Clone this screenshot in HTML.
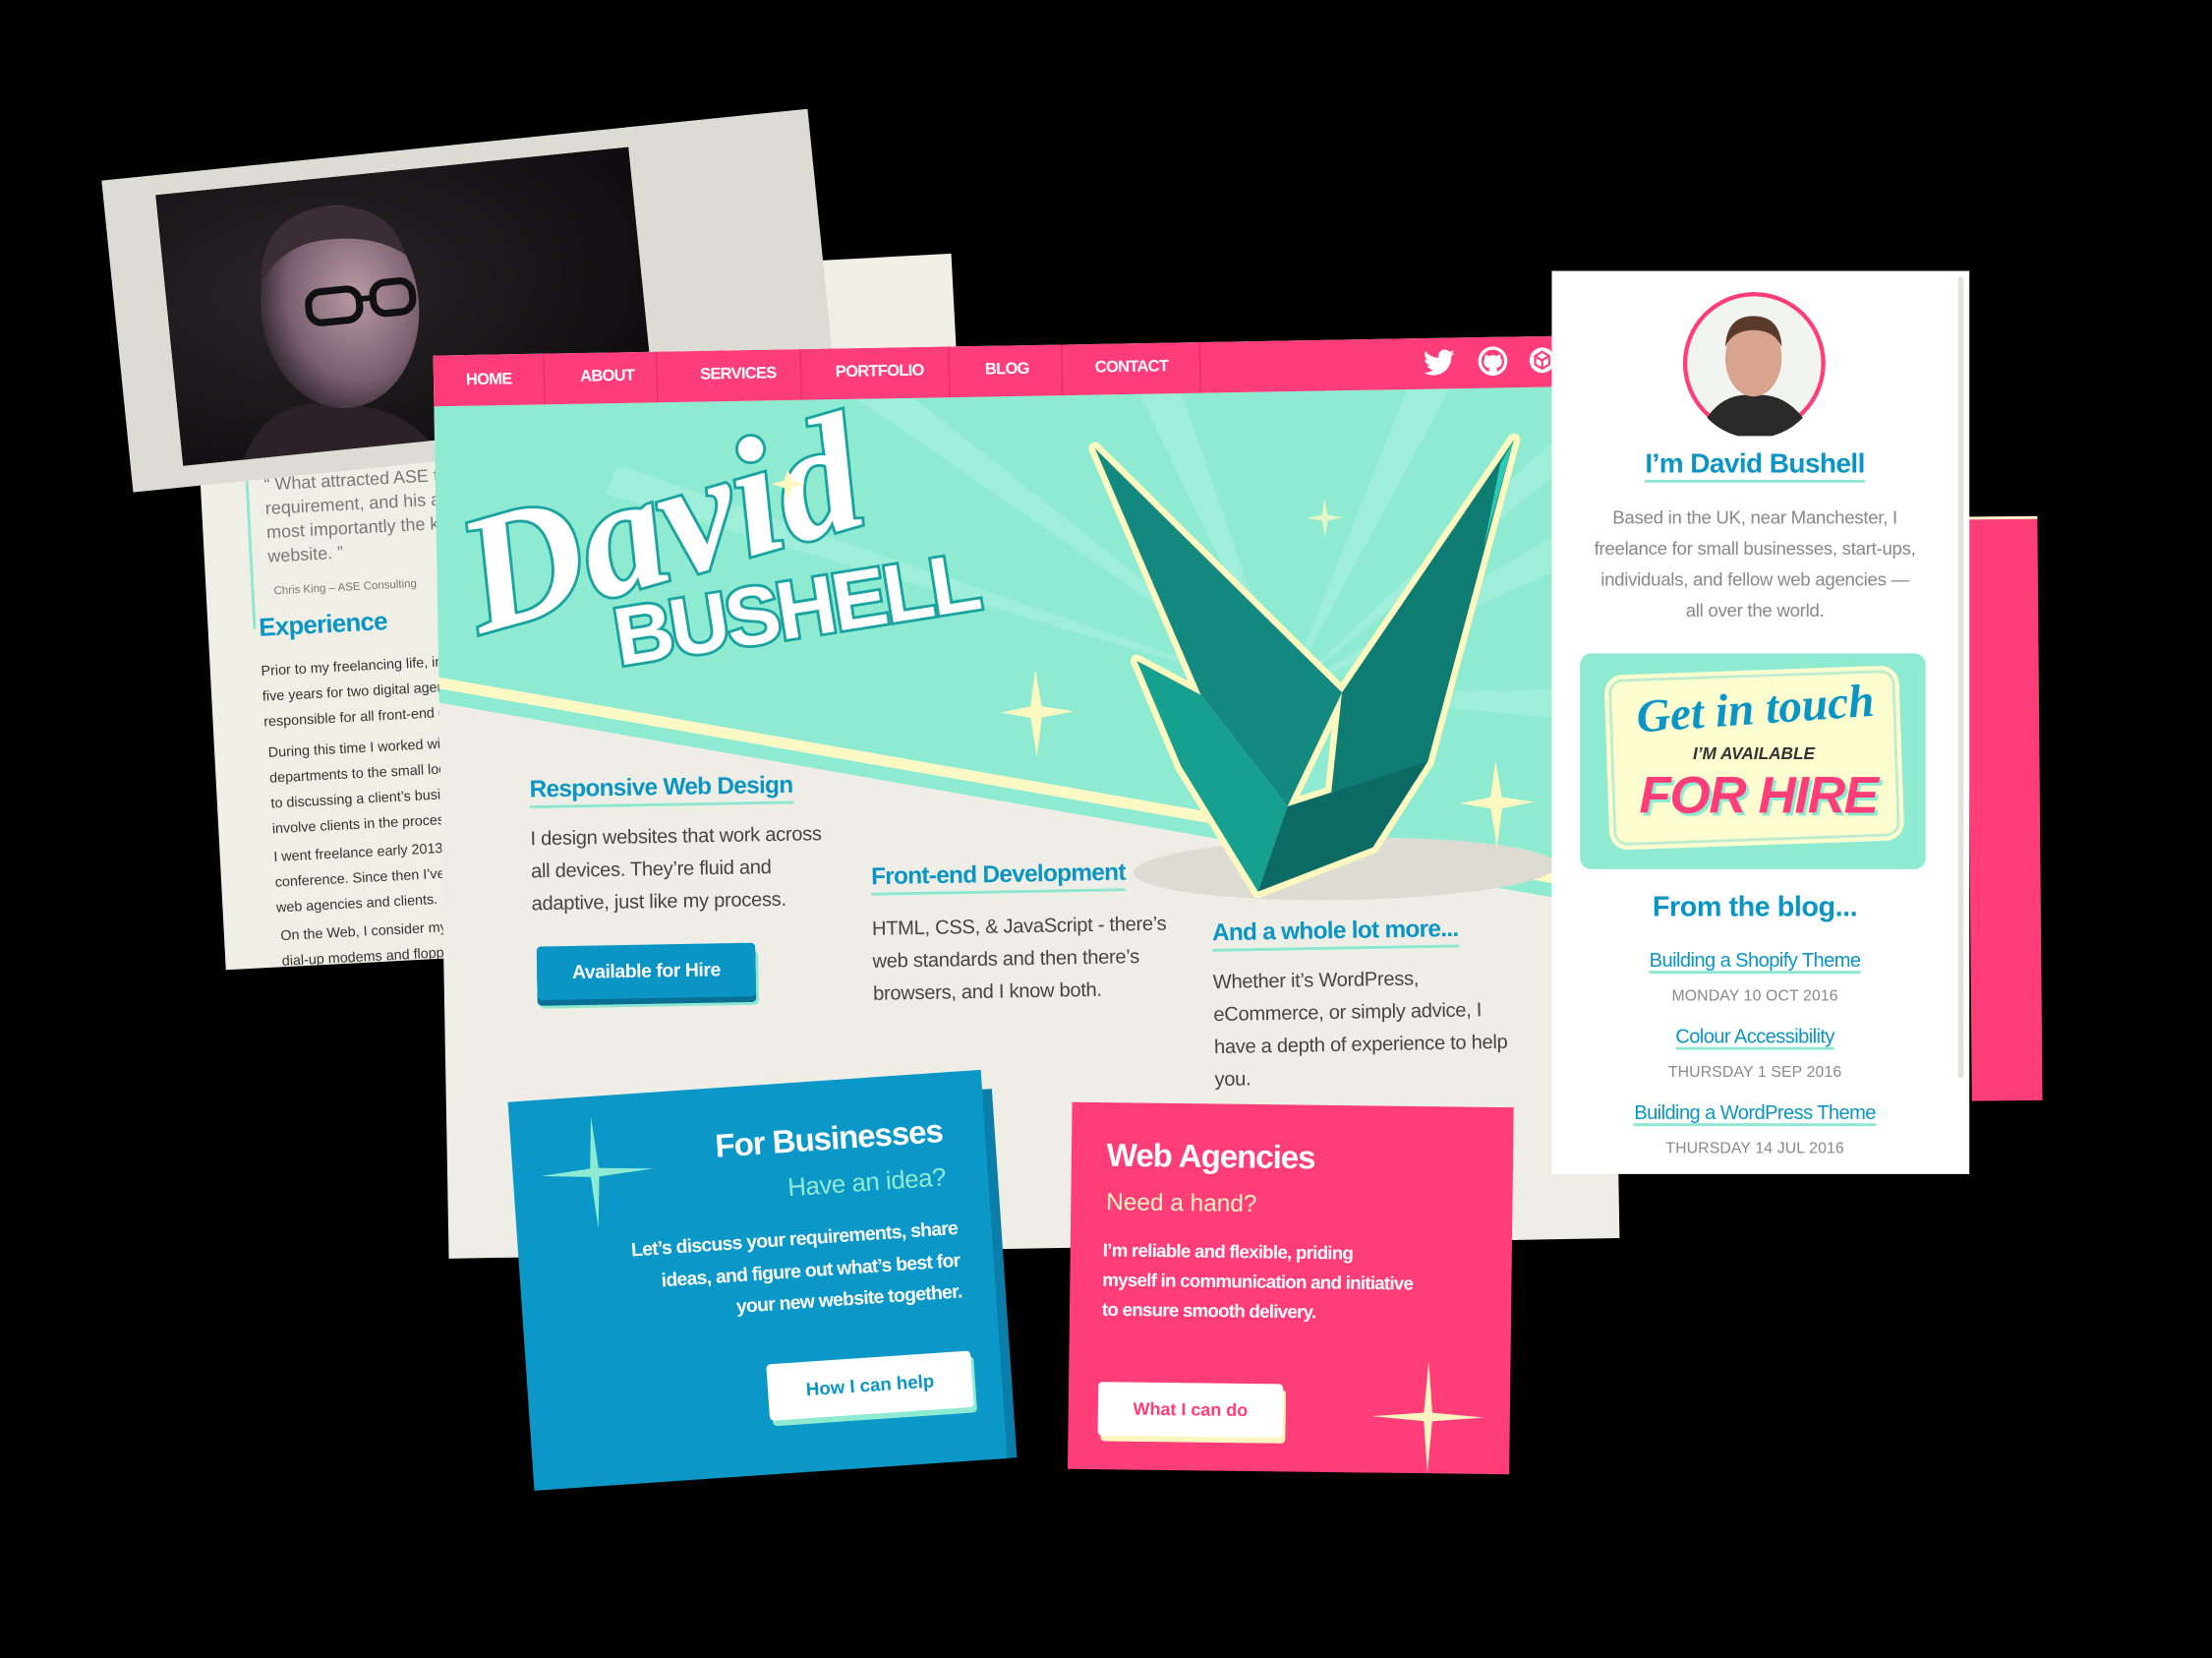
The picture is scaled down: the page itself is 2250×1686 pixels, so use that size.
<!DOCTYPE html>
<html><head><meta charset="utf-8"><style>
*{margin:0;padding:0;box-sizing:border-box}
html,body{width:2250px;height:1686px;background:#000;overflow:hidden}
#w{position:absolute;left:0;top:0;width:1568px;height:1175px;transform:scale(1.43495);transform-origin:0 0;font-family:"Liberation Sans",sans-serif}
.abs{position:absolute}
.paper{left:135px;top:208px;width:540px;height:480px;background:#f0efe6;transform:rotate(-3deg);transform-origin:0 0;overflow:hidden}
.paper p{position:absolute;font-size:10px;color:#333;line-height:18px;white-space:nowrap}
.photo{left:72px;top:128px;width:503px;height:222px;background:#dcdcd4;transform:rotate(-5.8deg);transform-origin:0 0;overflow:hidden}
.main{left:307px;top:252px;width:830px;height:640px;background:#efeee6;transform:rotate(-1deg);transform-origin:0 0;overflow:hidden}
.nav{position:absolute;left:0;top:0;width:830px;height:36px;background:#ff3d7a}
.nav span{position:absolute;top:11px;color:#fff;font-weight:bold;font-size:11.5px;letter-spacing:-0.5px}
.nav i{position:absolute;top:0;width:1px;height:36px;background:#e62f67}
.h{position:absolute;color:#0a95c5;font-weight:bold;font-size:17px;border-bottom:2px solid #8de6d0;line-height:22px;letter-spacing:-0.5px;white-space:nowrap}
.tx{position:absolute;color:#444;font-size:14px;line-height:23px;white-space:nowrap;letter-spacing:-0.2px}
.btn{position:absolute;background:#0a95c5;color:#fff;font-weight:bold;font-size:13.5px;text-align:center;line-height:38px;border-radius:3px;box-shadow:0 4px 0 #0a6f95,2px 6px 0 #8de6d0;letter-spacing:-0.3px}
.blue{left:360px;top:781px;width:336px;height:276px;background:#0b98c8;transform:rotate(-3.9deg);transform-origin:0 0;overflow:hidden}
.pink{left:760px;top:781px;width:313px;height:260px;background:#ff3d78;transform:rotate(0.7deg);transform-origin:0 0;overflow:hidden}
.side{left:1100px;top:192px;width:296px;height:640px;background:#fff}
.c{position:absolute;left:0;width:288px;text-align:center;white-space:nowrap}
.lk{color:#0a95c5;border-bottom:2px solid #8de6d0;font-size:14px;letter-spacing:-0.4px}
.dt{color:#888;font-size:11px;letter-spacing:0.1px}
</style></head><body><div id="w">

<div class="abs" style="left:1396px;top:366px;width:50px;height:414px;background:#ff3d78;transform:rotate(-0.5deg);border-top:2px solid #fdf5c8"></div>

<div class="abs paper">
 <div class="abs" style="left:32px;top:120px;width:2px;height:120px;background:#8de6d0"></div>
 <p style="left:45px;top:130px;font-size:12.5px;color:#777;line-height:17px">“ What attracted ASE to<br>requirement, and his a<br>most importantly the ke<br>website. ”</p>
 <p style="left:48px;top:205px;font-size:8px;color:#777">Chris King – ASE Consulting</p>
 <p style="left:36px;top:230px;font-size:18px;color:#0a95c5;font-weight:bold;letter-spacing:-0.5px">Experience</p>
 <p style="left:36px;top:262px">Prior to my freelancing life, imm<br>five years for two digital agenc<br>responsible for all front-end co</p>
 <p style="left:38px;top:320px">During this time I worked with<br>departments to the small local<br>to discussing a client’s busines<br>involve clients in the process t</p>
 <p style="left:38px;top:394px">I went freelance early 2013 a<br>conference. Since then I’ve p<br>web agencies and clients.</p>
 <p style="left:40px;top:450px">On the Web, I consider myse<br>dial-up modems and floppy</p>
</div>

<div class="abs photo">
 <svg class="abs" style="left:37px;top:14px" width="337" height="193" viewBox="0 0 337 193">
  <defs><radialGradient id="bg" cx="0.3" cy="0.4" r="0.8"><stop offset="0" stop-color="#2a2528"/><stop offset="1" stop-color="#0e0c0e"/></radialGradient>
  <radialGradient id="sk" cx="0.6" cy="0.45" r="0.6"><stop offset="0" stop-color="#b99aa4"/><stop offset="0.7" stop-color="#7a5f70"/><stop offset="1" stop-color="#3a2e38"/></radialGradient></defs>
  <rect width="337" height="193" fill="url(#bg)"/>
  <path d="M40 200 Q60 150 110 160 Q160 165 180 200Z" fill="#2a2226"/>
  <ellipse cx="122" cy="92" rx="56" ry="72" fill="url(#sk)"/>
  <path d="M68 70 Q72 22 120 20 Q165 22 172 60 Q150 42 112 44 Q84 46 68 70Z" fill="#3a2e34"/>
  <rect x="100" y="80" width="36" height="22" rx="9" fill="none" stroke="#111" stroke-width="5"/>
  <rect x="146" y="78" width="28" height="22" rx="9" fill="none" stroke="#111" stroke-width="5"/>
  <path d="M136 88 L146 88" stroke="#111" stroke-width="4"/>
 </svg>
</div>

<div class="abs main">
 <svg class="abs" style="left:0;top:0" width="830" height="640" viewBox="0 0 830 640">
  <polygon points="0,36 830,36 830,388 0,228" fill="#8eebd2"/>
  <g fill="#a6f0dc" opacity="0.7">
   <polygon points="600,250 300,36 340,36"/><polygon points="600,250 500,36 530,36"/>
   <polygon points="600,250 690,36 720,36"/><polygon points="600,250 830,120 830,150"/>
   <polygon points="600,250 830,250 830,275"/><polygon points="600,250 120,100 130,80"/>
   <polygon points="600,250 830,40 830,70"/>
  </g>
  <polygon points="0,228 830,388 830,396 0,236" fill="#fdf9c4"/>
  <polygon points="0,236 830,396 830,406 0,246" fill="#8eebd2"/>
  <g transform="rotate(-15 40 195)">
   <text x="30" y="195" font-family="Liberation Serif" font-style="italic" font-weight="bold" font-size="118" fill="#fff" stroke="#1aa3a0" stroke-width="4" paint-order="stroke">David</text>
  </g>
  <g transform="rotate(-8 128 222)">
   <text x="128" y="222" font-family="Liberation Sans" font-weight="bold" font-size="58" fill="#fff" stroke="#1aa3a0" stroke-width="4" paint-order="stroke" letter-spacing="-2">BUSHELL</text>
  </g>
  <ellipse cx="640" cy="375" rx="150" ry="22" fill="#dcdcd2"/>
  <g stroke="#fdf7c0" stroke-width="9" stroke-linejoin="round" fill="#fdf7c0">
   <polygon points="468,74 640,250 600,330 540,250"/><polygon points="765,73 700,300 630,330 640,250"/>
   <polygon points="495,225 540,250 600,330 578,390 525,300"/><polygon points="600,330 700,300 660,360 578,390"/>
  </g>
  <polygon points="468,74 640,250 600,330 540,250" fill="#14897f"/>
  <polygon points="765,73 700,300 630,330 640,250" fill="#0f7c73"/>
  <polygon points="765,73 742,150 755,90" fill="#2cc9b5"/>
  <polygon points="495,225 540,250 600,330 578,390 525,300" fill="#16a08f"/>
  <polygon points="600,330 700,300 660,360 578,390" fill="#0b6a63"/>
  <g fill="#fdf7c0">
   <path d="M423 230 L427 256 L450 260 L427 264 L423 292 L419 264 L398 260 L419 256Z"/>
   <path d="M748 300 L752 326 L775 330 L752 334 L748 362 L744 334 L722 330 L744 326Z"/>
   <path d="M630 112 L632 124 L643 126 L632 128 L630 140 L628 128 L617 126 L628 124Z" opacity="0.8"/>
   <path d="M250 85 L253 93 L262 95 L253 98 L250 106 L247 98 L238 95 L247 93Z"/>
  </g>
 </svg>
 <div class="nav">
  <span style="left:23px;top:12px">HOME</span><i style="left:78px"></i>
  <span style="left:104px">ABOUT</span><i style="left:158px"></i>
  <span style="left:189px">SERVICES</span><i style="left:260px"></i>
  <span style="left:285px">PORTFOLIO</span><i style="left:365px"></i>
  <span style="left:391px">BLOG</span><i style="left:445px"></i>
  <span style="left:469px">CONTACT</span><i style="left:543px"></i>
  <svg class="abs" style="left:700px;top:6px" width="26" height="24" viewBox="0 0 24 24"><path fill="#fff" d="M23 4.6a9 9 0 0 1-2.6.7 4.6 4.6 0 0 0 2-2.5 9 9 0 0 1-2.9 1.1 4.5 4.5 0 0 0-7.8 4.1A12.8 12.8 0 0 1 2.4 3.3a4.5 4.5 0 0 0 1.4 6 4.5 4.5 0 0 1-2-.6 4.5 4.5 0 0 0 3.6 4.5 4.5 4.5 0 0 1-2 .1 4.5 4.5 0 0 0 4.2 3.1A9 9 0 0 1 1 18.3a12.8 12.8 0 0 0 6.9 2c8.3 0 12.8-6.9 12.8-12.8v-.6A9 9 0 0 0 23 4.6z"/></svg>
  <svg class="abs" style="left:740px;top:6px" width="22" height="22" viewBox="0 0 24 24"><circle cx="12" cy="12" r="10" fill="none" stroke="#fff" stroke-width="2.5"/><path d="M9 21v-4c-2 0-4-1-4-5 0-1 .5-2 1-2.5-.2-.8 0-1.8.2-2.5 1 0 2 .6 2.6 1.1a8 8 0 0 1 6.4 0c.6-.5 1.6-1.1 2.6-1.1.2.7.4 1.7.2 2.5.5.5 1 1.5 1 2.5 0 4-2 5-4 5v4" fill="#fff"/></svg>
  <svg class="abs" style="left:776px;top:7px" width="20" height="20" viewBox="0 0 20 20"><circle cx="10" cy="10" r="9" fill="#fff"/><path d="M10 4 L15 7 L15 13 L10 16 L5 13 L5 7Z M5 7 L10 10 L15 7 M10 10 L10 16" fill="none" stroke="#ff3d7a" stroke-width="1.5"/></svg>
 </div>
 <div class="h" style="left:63px;top:298px">Responsive Web Design</div>
 <div class="tx" style="left:63px;top:332px">I design websites that work across<br>all devices. They’re fluid and<br>adaptive, just like my process.</div>
 <div class="btn" style="left:66px;top:420px;width:155px;height:38px">Available for Hire</div>
 <div class="h" style="left:304px;top:364px">Front-end Development</div>
 <div class="tx" style="left:304px;top:400px">HTML, CSS, &amp; JavaScript - there’s<br>web standards and then there’s<br>browsers, and I know both.</div>
 <div class="h" style="left:545px;top:408px">And a whole lot more...</div>
 <div class="tx" style="left:545px;top:442px">Whether it’s WordPress,<br>eCommerce, or simply advice, I<br>have a depth of experience to help<br>you.</div>
</div>

<div class="abs" style="left:690px;top:772px;width:22px;height:262px;background:#0a7ea8;transform:rotate(-3.9deg)"></div>
<div class="abs blue">
 <svg class="abs" style="left:20px;top:14px" width="80" height="80" viewBox="0 0 80 80"><path d="M38 0 L41 37 L80 40 L41 43 L38 80 L35 43 L0 40 L35 37Z" fill="#8eebd2"/></svg>
 <div class="abs" style="right:30px;top:28px;color:#fff;font-weight:bold;font-size:23px;letter-spacing:-0.7px">For Businesses</div>
 <div class="abs" style="right:30px;top:64px;color:#8eebd2;font-size:18px;letter-spacing:-0.3px">Have an idea?</div>
 <div class="abs" style="right:24px;top:100px;color:#fff;font-size:13.5px;line-height:22.5px;text-align:right;font-weight:bold;letter-spacing:-0.5px">Let’s discuss your requirements, share<br>ideas, and figure out what’s best for<br>your new website together.</div>
 <div class="abs" style="left:170px;top:198px;width:145px;height:40px;background:#fff;color:#0a95c5;font-weight:bold;font-size:13px;text-align:center;line-height:40px;border-radius:3px;box-shadow:2px 4px 0 #8eebd2">How I can help</div>
</div>

<div class="abs pink">
 <div class="abs" style="left:25px;top:24px;color:#fff;font-weight:bold;font-size:23px;letter-spacing:-0.7px">Web Agencies</div>
 <div class="abs" style="left:25px;top:61px;color:#fdf5c0;font-size:17px">Need a hand?</div>
 <div class="abs" style="left:23px;top:94px;color:#fff;font-size:13px;line-height:21px;font-weight:bold;letter-spacing:-0.5px">I’m reliable and flexible, priding<br>myself in communication and initiative<br>to ensure smooth delivery.</div>
 <div class="abs" style="left:21px;top:198px;width:131px;height:38px;background:#fff;color:#ff3d78;font-weight:bold;font-size:12.5px;text-align:center;line-height:38px;border-radius:3px;box-shadow:2px 4px 0 #fdf5c0">What I can do</div>
 <svg class="abs" style="left:215px;top:180px" width="80" height="80" viewBox="0 0 80 80"><path d="M40 0 L43 37 L80 40 L43 43 L40 80 L37 43 L0 40 L37 37Z" fill="#fdf5c0"/></svg>
</div>

<div class="abs side">
 <div class="abs" style="left:288px;top:4px;width:4px;height:568px;background:#e2e2de;border-radius:2px"></div>
 <svg class="abs" style="left:92px;top:14px" width="103" height="103" viewBox="0 0 103 103">
  <circle cx="51.5" cy="51.5" r="49" fill="#f2f4f0" stroke="#ff3d78" stroke-width="3"/>
  <path d="M18 90 Q30 72 51 74 Q72 72 86 90 A47 47 0 0 1 18 90Z" fill="#2a2a2a"/>
  <ellipse cx="51" cy="48" rx="20" ry="27" fill="#d9a48e"/>
  <path d="M31 40 Q32 18 51 18 Q70 18 71 40 Q66 28 51 28 Q36 28 31 40Z" fill="#5a3a2a"/>
 </svg>
 <div class="c" style="top:126px"><span class="lk" style="font-size:19.5px;font-weight:bold">I’m David Bushell</span></div>
 <div class="c" style="top:164px;color:#888;font-size:13px;line-height:22px;letter-spacing:-0.2px">Based in the UK, near Manchester, I<br>freelance for small businesses, start-ups,<br>individuals, and fellow web agencies —<br>all over the world.</div>
 <div class="abs" style="left:20px;top:271px;width:245px;height:153px;background:#8eebd2;border-radius:8px">
  <div class="abs" style="left:22px;top:15px;width:203px;height:118px;background:#fdfdd0;border:2px solid #bfeccf;border-radius:10px;transform:rotate(-2deg);box-shadow:0 0 0 3px #fdfdd0"></div>
  <div class="abs" style="left:40px;top:22px;color:#0a95c5;font-family:'Liberation Serif',serif;font-style:italic;font-weight:bold;font-size:33px;transform:rotate(-4deg);white-space:nowrap">Get in touch</div>
  <div class="abs" style="left:80px;top:64px;color:#333;font-style:italic;font-weight:bold;font-size:12px;white-space:nowrap">I’M AVAILABLE</div>
  <div class="abs" style="left:42px;top:80px;color:#ff3d78;font-weight:bold;font-style:italic;font-size:37px;letter-spacing:-1px;white-space:nowrap;text-shadow:2px 2px 0 #8eebd2">FOR HIRE</div>
 </div>
 <div class="c" style="top:440px;color:#0a95c5;font-weight:bold;font-size:20px;letter-spacing:-0.3px">From the blog...</div>
 <div class="c" style="top:480px"><span class="lk">Building a Shopify Theme</span></div>
 <div class="c" style="top:504px" ><span class="dt">MONDAY 10 OCT 2016</span></div>
 <div class="c" style="top:534px"><span class="lk">Colour Accessibility</span></div>
 <div class="c" style="top:558px"><span class="dt">THURSDAY 1 SEP 2016</span></div>
 <div class="c" style="top:588px"><span class="lk">Building a WordPress Theme</span></div>
 <div class="c" style="top:612px"><span class="dt">THURSDAY 14 JUL 2016</span></div>
</div>

</div></body></html>
